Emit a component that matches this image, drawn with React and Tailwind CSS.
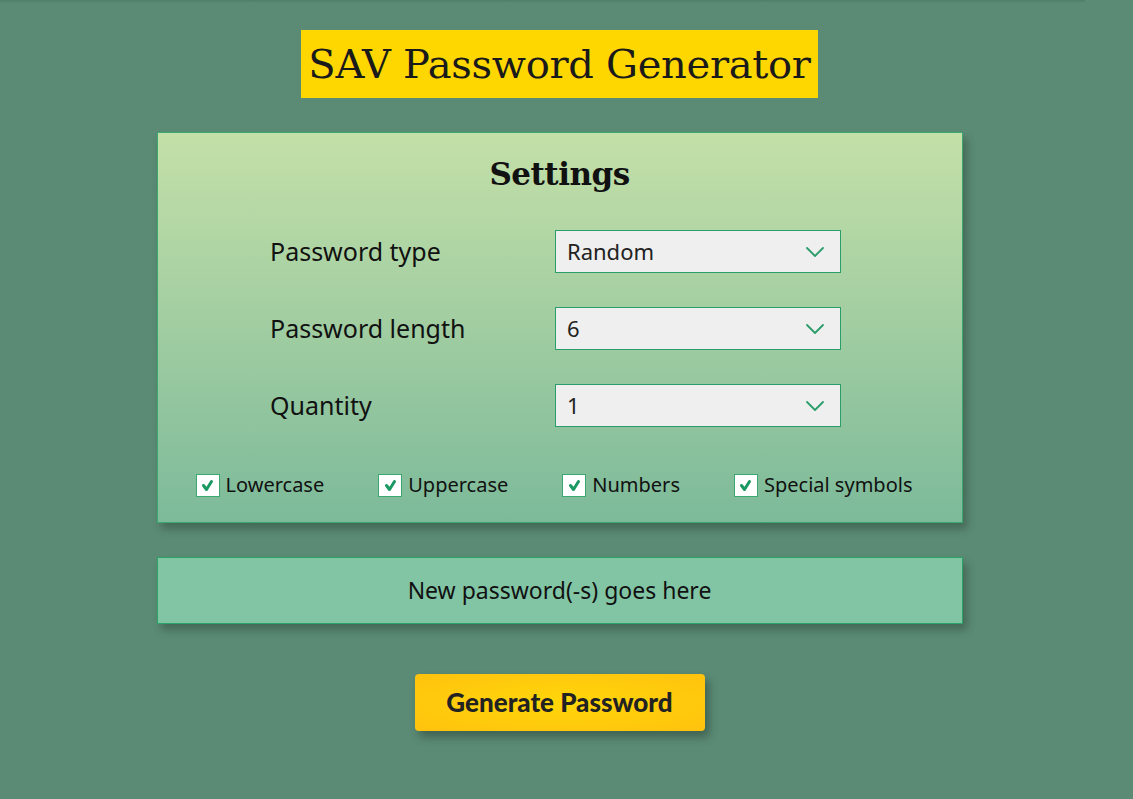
import React from "react";

const selects = [
  { label: "Password type", value: "Random" },
  { label: "Password length", value: "6" },
  { label: "Quantity", value: "1" },
];

const checks = ["Lowercase", "Uppercase", "Numbers", "Special symbols"];

function Chevron() {
  return (
    <svg width="20" height="12" viewBox="0 0 20 12" fill="none" className="shrink-0">
      <path d="M2 2l8 8 8-8" stroke="#2a9d6a" strokeWidth="1.8" strokeLinecap="round" strokeLinejoin="round" />
    </svg>
  );
}

function Check() {
  return (
    <span className="flex h-[23px] w-[24px] shrink-0 items-center justify-center border border-[#3aa86f] bg-white">
      <svg width="13" height="13" viewBox="0 0 13 13">
        <path d="M2.5 6.5l3 4L10.5 2.5" stroke="#1a9a62" strokeWidth="3" fill="none" strokeLinecap="round" strokeLinejoin="round" />
      </svg>
    </span>
  );
}

export default function App() {
  return (
    <div className="relative min-h-[799px] w-full overflow-hidden bg-[#5b8b74] font-['Noto_Sans',sans-serif]">
      {/* faint header shadow */}
      <div className="absolute left-0 top-0 h-[3px] w-[1085px] bg-gradient-to-b from-[#4f7d68] to-transparent" />

      <div className="flex w-[1119px] flex-col items-center pt-[30px]">
        <h1 className="flex h-[68px] items-center bg-[#ffd700] px-[7px] font-['DejaVu_Serif',serif] text-[40px] leading-none tracking-[-0.3px] text-[#1a1a1a]">
          SAV Password Generator
        </h1>

        <section className="mt-[34px] flex h-[391px] w-[806px] flex-col items-center border border-[#3aa86f] bg-gradient-to-b from-[#c4e0a8] to-[#7cba9a] shadow-[4px_6px_8px_rgba(0,0,0,0.25)]">
          <h2 className="mt-[21px] font-['DejaVu_Serif',serif] text-[31px] font-bold leading-[40px] tracking-[-0.5px] text-[#111]">
            Settings
          </h2>

          <div className="mt-[36px] flex flex-col gap-[34px] pr-[8px]">
            {selects.map((s) => (
              <div key={s.label} className="flex items-center">
                <span className="w-[285px] text-[25px] leading-none text-[#111]">{s.label}</span>
                <div className="flex h-[43px] w-[286px] items-center justify-between border border-[#2a9d6a] bg-[#efefef] pl-[11px] pr-[15px]">
                  <span className="text-[22px] text-[#222]">{s.value}</span>
                  <Chevron />
                </div>
              </div>
            ))}
          </div>

          <div className="mt-[43px] flex items-center gap-[54px] pr-[11px]">
            {checks.map((c) => (
              <label key={c} className="flex items-center gap-[6px]">
                <Check />
                <span className="text-[20px] text-[#111]">{c}</span>
              </label>
            ))}
          </div>
        </section>

        <div className="mt-[34px] flex h-[67px] w-[806px] items-center justify-center border border-[#2aa36a] bg-[#82c5a5] shadow-[4px_6px_8px_rgba(0,0,0,0.25)]">
          <span className="text-[23px] text-[#111]">New password(-s) goes here</span>
        </div>

        <button className="mt-[50px] h-[57px] w-[290px] rounded-[4px] bg-[radial-gradient(ellipse_at_center,#ffd60a,#ffc20e)] font-['Lato',sans-serif] text-[26px] font-black text-[#222] shadow-[4px_6px_10px_rgba(0,0,0,0.3)]">
          Generate Password
        </button>
      </div>
    </div>
  );
}
